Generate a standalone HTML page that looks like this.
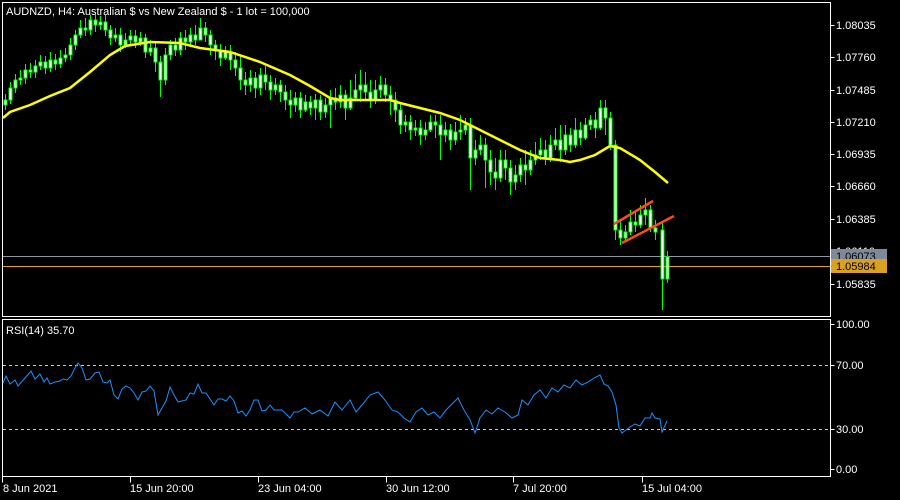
<!DOCTYPE html>
<html><head><meta charset="utf-8"><style>
html,body{margin:0;padding:0;background:#000;width:900px;height:500px;overflow:hidden}
svg{display:block}
text{font-family:"Liberation Sans",sans-serif;font-size:11px;fill:#fff}
.b rect{width:3px;fill:#fff;stroke:#00ff00;stroke-width:1}
</style></head><body>
<svg width="900" height="500" viewBox="0 0 900 500" xmlns="http://www.w3.org/2000/svg" shape-rendering="crispEdges">
<rect width="900" height="500" fill="#000"/>
<!-- frames -->
<g fill="none" stroke="#fff" stroke-width="1">
<path d="M2.5 2.5H830.5V316.5H2.5Z"/>
<path d="M2.5 319.5H830.5V476.5H2.5Z"/>
<path d="M830.5 25.5h4M830.5 57.5h4M830.5 90.5h4M830.5 122.5h4M830.5 154.5h4M830.5 186.5h4M830.5 219.5h4M830.5 251.5h4M830.5 284.5h4M830.5 324.5h4M830.5 365.5h4M830.5 429.5h4M830.5 469.5h4"/>
<path d="M2.5 476.5v6M130.5 476.5v6M258.5 476.5v6M386.5 476.5v6M513.5 476.5v6M642.5 476.5v6"/>
</g>
<!-- price labels -->
<text x="836" y="29">1.08035</text>
<text x="836" y="61">1.07760</text>
<text x="836" y="94">1.07485</text>
<text x="836" y="126">1.07210</text>
<text x="836" y="158">1.06935</text>
<text x="836" y="190">1.06660</text>
<text x="836" y="223">1.06385</text>
<text x="836" y="255">1.06110</text>
<text x="836" y="288">1.05835</text>
<!-- horizontal lines -->
<path d="M3 256.5H830" stroke="#8a97a6" stroke-width="1"/>
<path d="M3 266.5H830" stroke="#e8a21a" stroke-width="1"/>
<rect x="831" y="249" width="56" height="13" fill="#7d8a99"/>
<text x="836" y="260" style="fill:#000">1.06073</text>
<rect x="831" y="259" width="56" height="14" fill="#daa020"/>
<text x="836" y="270" style="fill:#000">1.05984</text>
<!-- title -->
<text x="6" y="15">AUDNZD, H4:  Australian $ vs New Zealand $ - 1 lot = 100,000</text>
<!-- wicks -->
<path stroke="#00ff00" stroke-width="1" fill="none" d="M5.5 94V110M10.5 82V104M15.5 74V93M20.5 70V85M25.5 64V84M30.5 63V78M35.5 60V78M40.5 55V70M45.5 56V74M50.5 52V72M55.5 54V70M60.5 50V68M65.5 48V62M70.5 38V60M75.5 30V50M80.5 20V38M85.5 18V36M90.5 15V35M95.5 14V32M100.5 16V30M105.5 15V36M110.5 25V45M115.5 28V42M120.5 28V52M125.5 33V48M130.5 30V44M135.5 30V48M140.5 32V46M145.5 34V58M150.5 40V56M155.5 42V72M160.5 56V97M165.5 48V85M170.5 40V60M175.5 38V56M180.5 32V55M185.5 30V50M190.5 28V46M195.5 25V45M200.5 18V35M205.5 22V42M210.5 30V55M215.5 40V60M220.5 44V66M225.5 46V60M230.5 45V70M235.5 52V76M240.5 56V90M245.5 72V95M250.5 70V92M255.5 72V98M260.5 68V95M265.5 66V90M270.5 75V100M275.5 78V95M280.5 80V102M285.5 85V110M290.5 90V118M295.5 92V112M300.5 92V118M305.5 95V112M310.5 96V115M315.5 94V120M320.5 95V120M325.5 98V118M330.5 90V128M335.5 88V110M340.5 85V108M345.5 90V120M350.5 80V110M355.5 74V100M360.5 70V102M365.5 72V100M370.5 80V108M375.5 80V104M380.5 76V98M385.5 78V102M390.5 86V115M395.5 92V122M400.5 104V134M405.5 115V132M410.5 115V140M415.5 120V136M420.5 120V145M425.5 122V140M430.5 115V132M435.5 115V138M440.5 115V160M445.5 122V142M450.5 124V150M455.5 122V145M460.5 115V140M465.5 118V135M470.5 118V190M475.5 140V165M480.5 135V155M485.5 138V188M490.5 150V185M495.5 158V190M500.5 150V182M505.5 150V180M510.5 160V195M515.5 165V190M520.5 158V182M525.5 150V185M530.5 150V175M535.5 142V165M540.5 138V160M545.5 140V165M550.5 135V162M555.5 128V150M560.5 125V162M565.5 125V155M570.5 128V152M575.5 118V148M580.5 122V145M585.5 118V140M590.5 115V130M595.5 112V138M600.5 100V130M605.5 100V135M610.5 112V150M615.5 140V240M620.5 220V245M625.5 225V242M630.5 210V235M635.5 212V232M640.5 205V228M645.5 198V225M650.5 205V232M655.5 220V240M662.5 222V310M667.5 251V283"/>
<g class="b">
<rect x="4" y="100" height="5"/><rect x="9" y="88" height="12"/><rect x="14" y="80" height="8"/><rect x="19" y="78" height="2"/><rect x="24" y="70" height="8"/><rect x="29" y="70" height="2"/><rect x="34" y="66" height="6"/><rect x="39" y="62" height="4"/><rect x="44" y="62" height="6"/><rect x="49" y="60" height="8"/><rect x="54" y="60" height="4"/><rect x="59" y="58" height="6"/><rect x="64" y="55" height="3"/><rect x="69" y="45" height="10"/><rect x="74" y="35" height="10"/><rect x="79" y="28" height="7"/><rect x="84" y="28" height="2"/><rect x="89" y="20" height="10"/><rect x="94" y="20" height="5"/><rect x="99" y="22" height="3"/><rect x="104" y="22" height="8"/><rect x="109" y="30" height="8"/><rect x="114" y="35" height="3"/><rect x="119" y="35" height="10"/><rect x="124" y="40" height="5"/><rect x="129" y="36" height="4"/><rect x="134" y="36" height="6"/><rect x="139" y="38" height="4"/><rect x="144" y="38" height="14"/><rect x="149" y="48" height="4"/><rect x="154" y="48" height="14"/><rect x="159" y="62" height="18"/><rect x="164" y="55" height="25"/><rect x="169" y="45" height="10"/><rect x="174" y="45" height="5"/><rect x="179" y="38" height="12"/><rect x="184" y="38" height="4"/><rect x="189" y="35" height="7"/><rect x="194" y="35" height="5"/><rect x="199" y="28" height="12"/><rect x="204" y="28" height="7"/><rect x="209" y="35" height="10"/><rect x="214" y="45" height="5"/><rect x="219" y="50" height="8"/><rect x="224" y="52" height="6"/><rect x="229" y="52" height="8"/><rect x="234" y="60" height="8"/><rect x="239" y="68" height="12"/><rect x="244" y="80" height="5"/><rect x="249" y="78" height="7"/><rect x="254" y="78" height="10"/><rect x="259" y="75" height="13"/><rect x="264" y="75" height="7"/><rect x="269" y="82" height="8"/><rect x="274" y="85" height="5"/><rect x="279" y="85" height="7"/><rect x="284" y="92" height="8"/><rect x="289" y="100" height="5"/><rect x="294" y="98" height="7"/><rect x="299" y="98" height="12"/><rect x="304" y="102" height="8"/><rect x="309" y="102" height="6"/><rect x="314" y="100" height="8"/><rect x="319" y="100" height="12"/><rect x="324" y="105" height="7"/><rect x="329" y="98" height="7"/><rect x="334" y="98" height="4"/><rect x="339" y="95" height="7"/><rect x="344" y="95" height="13"/><rect x="349" y="98" height="10"/><rect x="354" y="90" height="8"/><rect x="359" y="85" height="5"/><rect x="364" y="85" height="7"/><rect x="369" y="92" height="8"/><rect x="374" y="90" height="10"/><rect x="379" y="85" height="5"/><rect x="384" y="85" height="10"/><rect x="389" y="95" height="5"/><rect x="394" y="100" height="10"/><rect x="399" y="110" height="15"/><rect x="404" y="122" height="3"/><rect x="409" y="122" height="8"/><rect x="414" y="128" height="2"/><rect x="419" y="128" height="7"/><rect x="424" y="130" height="5"/><rect x="429" y="122" height="8"/><rect x="434" y="122" height="3"/><rect x="439" y="125" height="10"/><rect x="444" y="130" height="5"/><rect x="449" y="130" height="10"/><rect x="454" y="132" height="8"/><rect x="459" y="130" height="2"/><rect x="464" y="125" height="5"/><rect x="469" y="125" height="33"/><rect x="474" y="150" height="8"/><rect x="479" y="145" height="5"/><rect x="484" y="145" height="15"/><rect x="489" y="160" height="12"/><rect x="494" y="172" height="6"/><rect x="499" y="160" height="18"/><rect x="504" y="160" height="8"/><rect x="509" y="168" height="14"/><rect x="514" y="175" height="7"/><rect x="519" y="165" height="10"/><rect x="524" y="165" height="5"/><rect x="529" y="160" height="10"/><rect x="534" y="155" height="5"/><rect x="539" y="150" height="5"/><rect x="544" y="150" height="8"/><rect x="549" y="145" height="13"/><rect x="554" y="140" height="5"/><rect x="559" y="140" height="10"/><rect x="564" y="135" height="15"/><rect x="569" y="135" height="10"/><rect x="574" y="130" height="15"/><rect x="579" y="130" height="8"/><rect x="584" y="125" height="13"/><rect x="589" y="120" height="5"/><rect x="594" y="120" height="8"/><rect x="599" y="108" height="20"/><rect x="604" y="108" height="10"/><rect x="609" y="118" height="27"/><rect x="614" y="145" height="85"/><rect x="619" y="230" height="8"/><rect x="624" y="232" height="6"/><rect x="629" y="222" height="10"/><rect x="634" y="222" height="3"/><rect x="639" y="215" height="10"/><rect x="644" y="210" height="5"/><rect x="649" y="210" height="18"/><rect x="654" y="228" height="4"/><rect x="661" y="230" height="49"/><rect x="666" y="257" height="22"/>
</g>
<!-- MA -->
<polyline shape-rendering="auto" fill="none" stroke="#ffff00" stroke-width="2.5" points="3,118 10,112 30,105 50,96 70,88 90,72 110,55 125,46 150,42 180,43 200,48 230,52 260,62 290,75 310,86 330,98 340,100 390,100 400,103 420,108 440,113 460,120 480,130 500,140 520,150 540,158 560,160 570,162 580,160 595,155 610,146 620,148 640,160 655,172 668,183"/>
<!-- channel -->
<g shape-rendering="auto" stroke="#ff4a1a" stroke-width="2.5">
<line x1="614" y1="224" x2="653" y2="201"/>
<line x1="622" y1="243" x2="674" y2="216"/>
</g>
<!-- RSI -->
<text x="6" y="334">RSI(14) 35.70</text>
<text x="836" y="328">100.00</text>
<text x="836" y="369">70.00</text>
<text x="836" y="433">30.00</text>
<text x="836" y="473">0.00</text>
<g stroke="#c8c8c8" stroke-width="1" stroke-dasharray="3,3">
<path d="M3 365.5H830M3 429.5H830"/>
</g>
<polyline shape-rendering="auto" fill="none" stroke="#1e90ff" stroke-width="1" points="3,383 6,376 10,384 15,380 18,386 25,378 31,371 35,379 40,374 44,382 47,378 50,384 55,382 60,381 63,379 67,380 71,376 75,368 78,363 82,368 86,380 90,379 95,373 99,372 103,382 107,383 110,380 114,395 118,399 122,389 126,386 130,388 134,393 138,400 142,392 146,391 150,386 154,391 158,415 162,408 166,401 170,387 174,395 178,402 182,401 186,400 190,393 194,394 198,384 202,393 206,393 210,399 214,405 218,399 222,399 226,401 230,396 234,401 238,413 242,411 246,416 250,410 254,400 258,400 262,411 266,410 270,405 274,410 278,410 282,410 286,414 290,418 294,412 298,412 305,408 312,414 320,410 328,416 335,402 342,410 350,400 356,412 362,405 370,395 378,392 385,400 392,410 398,412 404,418 410,422 416,412 422,408 428,415 434,412 440,418 446,410 452,404 458,398 464,410 470,420 475,433 480,418 486,410 492,414 498,408 505,412 512,418 518,415 522,400 528,405 534,395 540,390 546,398 552,388 558,392 564,385 570,388 576,380 582,385 588,382 594,378 600,375 604,384 608,386 612,392 616,405 619,428 622,433 626,430 630,427 635,424 640,426 645,418 650,418 652,413 655,418 660,419 662,432 667,421"/>
<!-- time labels -->
<text x="3" y="492">8 Jun 2021</text>
<text x="130" y="492">15 Jun 20:00</text>
<text x="258" y="492">23 Jun 04:00</text>
<text x="386" y="492">30 Jun 12:00</text>
<text x="513" y="492">7 Jul 20:00</text>
<text x="642" y="492">15 Jul 04:00</text>
</svg>
</body></html>
